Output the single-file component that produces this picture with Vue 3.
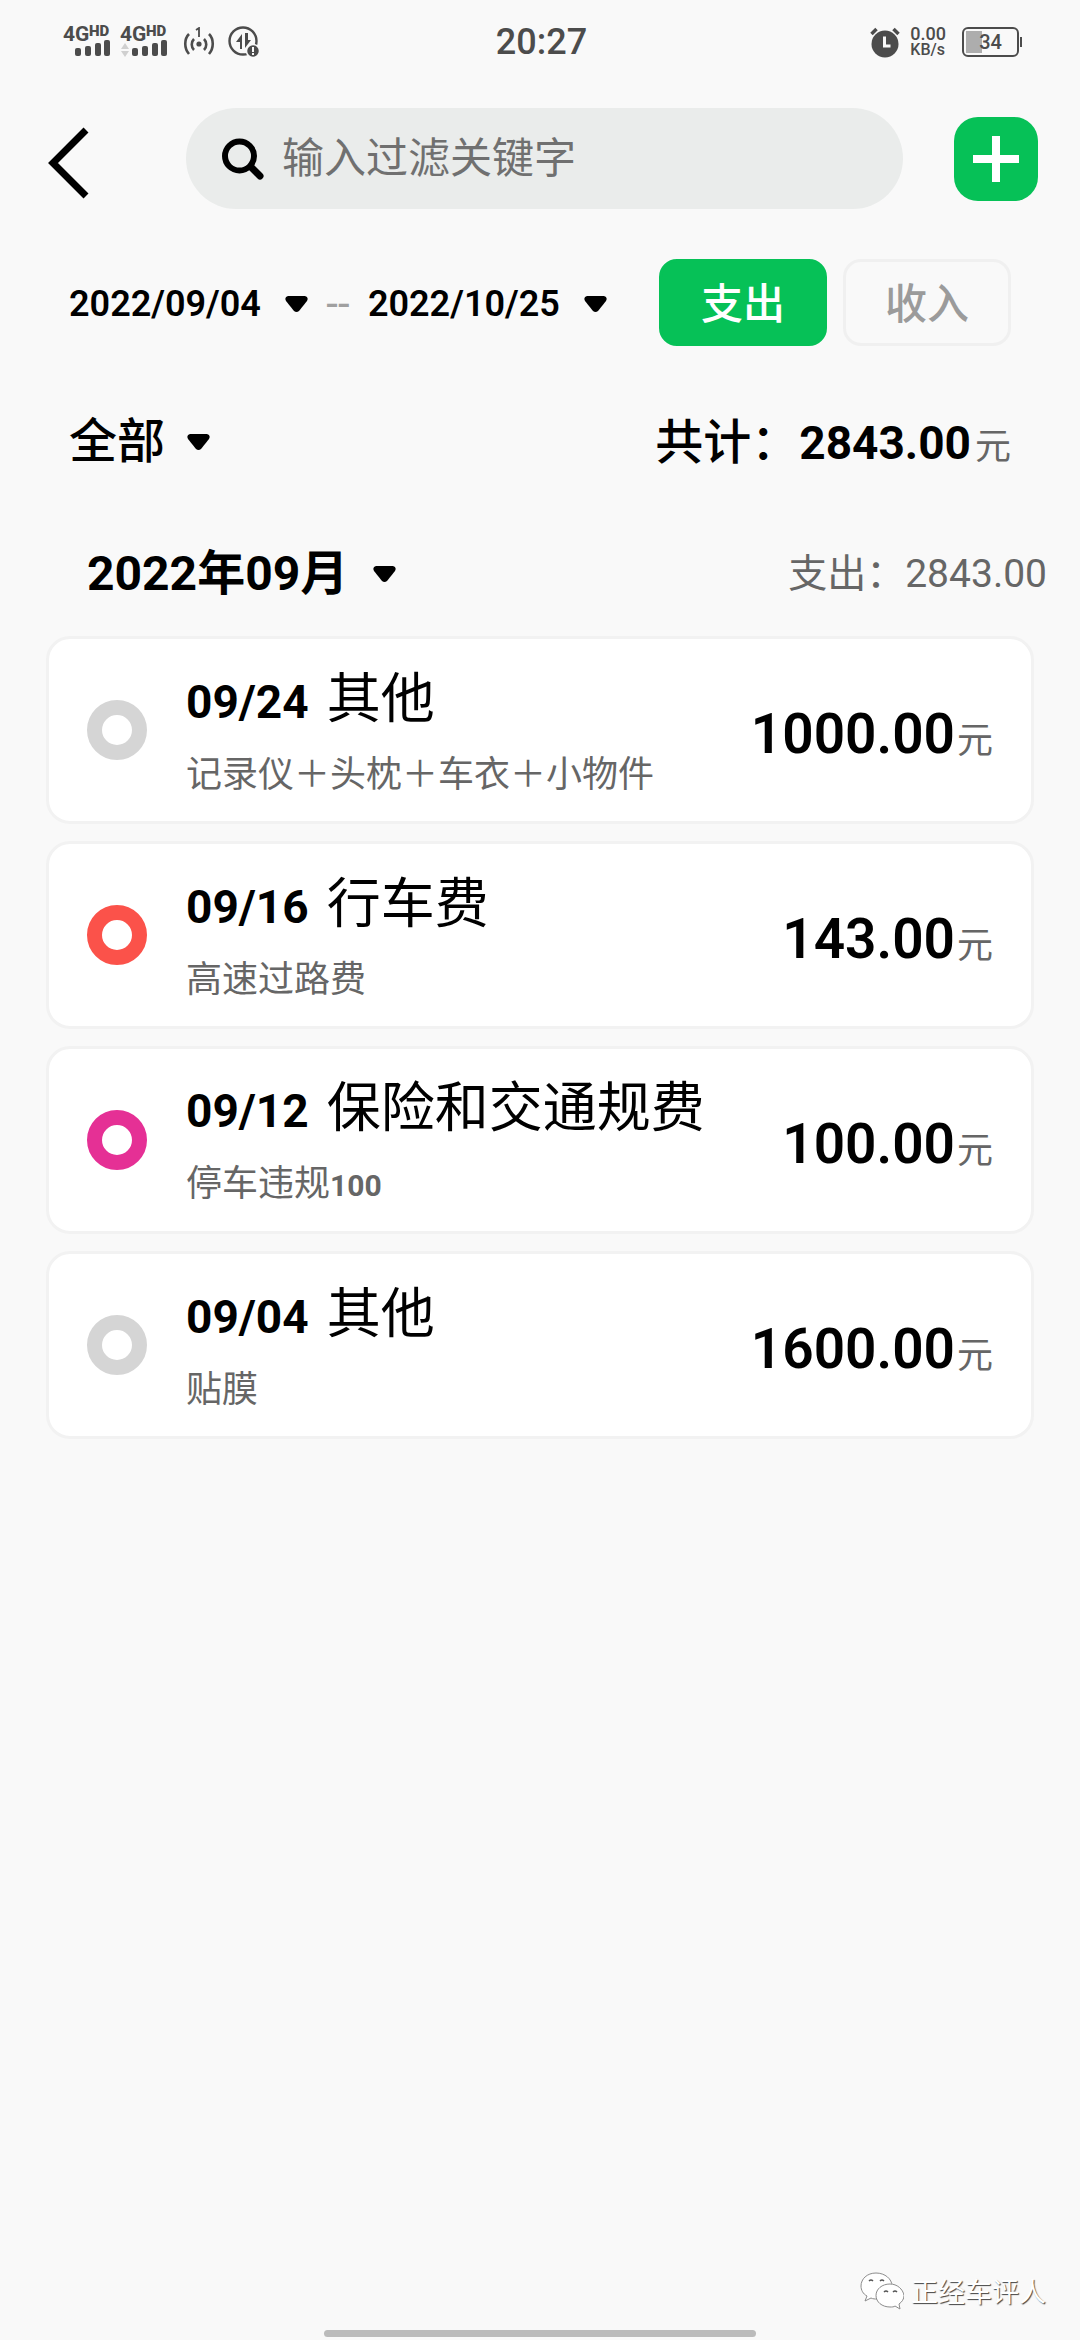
<template>
  <div class="page">
    <div class="status-bar">
      <div class="status-left">
        <svg width="54" height="48" viewBox="-2 -6 54 48" class="signal">
          <text x="0" y="17" class="net">4G</text>
          <text x="26" y="12" class="hd">HD</text>
          <rect x="12" y="24" width="6" height="8" rx="2" />
          <rect x="22" y="22" width="6" height="10" rx="2" />
          <rect x="32" y="19" width="6" height="13" rx="2" />
          <rect x="41" y="16" width="6" height="16" rx="2" />
        </svg>
        <svg width="54" height="48" viewBox="-2 -6 54 48" class="signal">
          <text x="0" y="17" class="net">4G</text>
          <text x="26" y="12" class="hd">HD</text>
          <path d="M1 25l4-6 4 6zM1 27h8l-4 6z" fill="#d0d0d0" />
          <rect x="12" y="24" width="6" height="8" rx="2" />
          <rect x="22" y="22" width="6" height="10" rx="2" />
          <rect x="32" y="19" width="6" height="13" rx="2" />
          <rect x="41" y="16" width="6" height="16" rx="2" />
        </svg>
        <svg width="32" height="30" viewBox="0 0 32 30" class="hotspot" fill="none" stroke="#4c4c4c" stroke-width="2.6">
          <path d="M6 7c-5 5-5 14 0 20M26 7c5 5 5 14 0 20M11 12c-3 3-3 8 0 11M21 12c3 3 3 8 0 11" />
          <path d="M13 3l3-2v9" stroke-width="1.8" />
          <circle cx="16" cy="17" r="2.6" fill="#4c4c4c" stroke="none" />
        </svg>
        <svg width="32" height="32" viewBox="0 0 32 32" class="data-icon">
          <circle cx="15" cy="15" r="13.5" fill="none" stroke="#4c4c4c" stroke-width="2.4" />
          <path d="M14 23V8l-6 8h4v7zM17 7v15l6-8h-3V7z" fill="#4c4c4c" />
          <circle cx="25" cy="25" r="6.5" fill="#4c4c4c" stroke="#f9f9f9" stroke-width="1.5" />
          <path d="M25 21v5M25 27v2" stroke="#f9f9f9" stroke-width="2" />
        </svg>
      </div>
      <div class="status-time">20:27</div>
      <div class="status-right">
        <svg width="30" height="32" viewBox="0 0 30 32">
          <circle cx="15" cy="18" r="13.5" fill="#4c4c4c" />
          <path d="M1.5 8l5-5M28.5 8l-5-5" stroke="#4c4c4c" stroke-width="3.5" />
          <path d="M14.5 10.5V20h6" fill="none" stroke="#f9f9f9" stroke-width="3" />
        </svg>
        <div class="speed"><span class="speed-num">0.00</span><span class="speed-unit">KB/s</span></div>
        <div class="battery"><span>34</span></div>
      </div>
    </div>

    <header class="header">
      <button class="btn-back" aria-label="返回">
        <svg width="42" height="72" viewBox="0 0 42 72"><path d="M38 3L5 36l33 33" fill="none" stroke="#000" stroke-width="7" /></svg>
      </button>
      <label class="search">
        <svg width="42" height="42" viewBox="0 0 42 42" fill="none" stroke="#000">
          <circle cx="17.5" cy="18" r="14.5" stroke-width="6" />
          <path d="M29 29l9 9" stroke-width="7" stroke-linecap="round" />
        </svg>
        <input v-model="keyword" type="text" placeholder="输入过滤关键字" aria-label="输入过滤关键字" />
      </label>
      <button class="btn-add" aria-label="添加">
        <svg width="46" height="46" viewBox="0 0 46 46"><path d="M23 0v46M0 23h46" stroke="#fff" stroke-width="8" /></svg>
      </button>
    </header>

    <section class="filters">
      <div class="dates">
        <button class="btn-date">{{ startDate }}<svg class="arrow" viewBox="0 0 23 16"><path d="M3 0h17q4 1 2 5l-8 10q-2.500 2-5 0L1 5q-2-4 2-5z" /></svg></button>
        <span class="dash">--</span>
        <button class="btn-date">{{ endDate }}<svg class="arrow" viewBox="0 0 23 16"><path d="M3 0h17q4 1 2 5l-8 10q-2.500 2-5 0L1 5q-2-4 2-5z" /></svg></button>
      </div>
      <div class="types">
        <button v-for="t in types" :key="t" class="btn-type" :class="{ active: t === type }" @click="type = t">{{ t }}</button>
      </div>
    </section>

    <section class="summary">
      <label class="picker">
        <select v-model="category" aria-label="分类"><option>全部</option></select>
        <svg class="arrow" viewBox="0 0 23 16"><path d="M3 0h17q4 1 2 5l-8 10q-2.500 2-5 0L1 5q-2-4 2-5z" /></svg>
      </label>
      <div class="total">共计：<span class="total-num">{{ total }}</span><span class="unit">元</span></div>
    </section>

    <section class="month">
      <label class="picker month-picker">
        <select v-model="month" aria-label="月份"><option>2022年09月</option></select>
        <svg class="arrow" viewBox="0 0 23 16"><path d="M3 0h17q4 1 2 5l-8 10q-2.500 2-5 0L1 5q-2-4 2-5z" /></svg>
      </label>
      <div class="month-total">{{ type }}：{{ total }}</div>
    </section>

    <ul class="list">
      <li v-for="item in items" :key="item.date" class="item-card">
        <span class="ring" :style="{ borderColor: item.color }"></span>
        <div class="info">
          <div class="title"><span class="date">{{ item.date }}</span>{{ item.name }}</div>
          <div class="note">{{ item.note }}<span v-if="item.noteNum" class="note-num">{{ item.noteNum }}</span></div>
        </div>
        <div class="amount"><span class="amount-num">{{ item.amount.toFixed(2) }}</span><span class="unit">元</span></div>
      </li>
    </ul>

    <footer class="footer">
      <div class="watermark">
        <svg width="44" height="38" viewBox="0 0 44 38" fill="#fff" stroke="#8c8c8c" stroke-width="1">
          <path d="M16 1C7 1 1 7 1 14c0 4 2 8 6 10l-2 5 6-3c2 1 4 1 6 1 8 0 15-6 15-13S25 1 16 1z" />
          <path d="M30 12c-8 0-14 5-14 11.500S22 35 30 35c2 0 4 0 5-1l5 3-1-5c3-2 5-5 5-8.500C43 17 37 12 30 12z" />
          <path d="M9 9q2-2 4 0M20 9q2-2 4 0M24 20q2-2 4 0M33 20q2-2 4 0" fill="none" stroke="#555" stroke-width="1.5" />
        </svg>
        <span>正经车评人</span>
      </div>
      <div class="home-bar"></div>
    </footer>
  </div>
</template>

<script setup>
import { ref, computed } from 'vue';

const keyword = ref('');
const startDate = ref('2022/09/04');
const endDate = ref('2022/10/25');
const types = ['支出', '收入'];
const type = ref('支出');
const category = ref('全部');
const month = ref('2022年09月');
const items = ref([
  { date: '09/24', name: '其他', note: '记录仪＋头枕＋车衣＋小物件', amount: 1000, color: '#d5d5d5' },
  { date: '09/16', name: '行车费', note: '高速过路费', amount: 143, color: '#fb524a' },
  { date: '09/12', name: '保险和交通规费', note: '停车违规', noteNum: '100', amount: 100, color: '#e53095' },
  { date: '09/04', name: '其他', note: '贴膜', amount: 1600, color: '#d5d5d5' },
]);
const total = computed(() => items.value.reduce((sum, i) => sum + i.amount, 0).toFixed(2));
</script>

<style>
body { margin: 0; background: #f9f9f9; }
</style>

<style scoped>
.page { min-height: 100vh; display: flex; flex-direction: column; background: #f9f9f9; color: #000; font-family: Roboto, "Noto Sans CJK SC", sans-serif; }
button, input, select { font: inherit; color: inherit; margin: 0; padding: 0; border: none; background: none; }
button { cursor: pointer; }
svg { display: block; flex: none; }

.status-bar { display: grid; grid-template-columns: 1fr auto 1fr; align-items: center; height: 84px; padding: 0 58px 0 61px; color: #4c4c4c; font-weight: 500; }
.status-left { display: flex; align-items: center; gap: 3px; }
.signal { fill: #4c4c4c; }
.net { font-size: 21px; font-weight: 700; }
.hd { font-size: 15px; font-weight: 900; }
.hotspot { margin-left: 8px; }
.data-icon { margin-left: 10px; }
.status-time { font-size: 36px; }
.status-right { display: flex; align-items: center; justify-content: flex-end; gap: 10px; }
.speed { display: flex; flex-direction: column; }
.speed-num { font-size: 18px; line-height: 16px; }
.speed-unit { font-size: 16px; line-height: 16px; }
.battery { position: relative; box-sizing: border-box; width: 57px; height: 30px; margin: 0 3px 0 6px; border: 2px solid #4c4c4c; border-radius: 6px; display: flex; align-items: center; justify-content: center; font-size: 20px; background: linear-gradient(#adadad, #adadad) 2px 2px / 16px 22px no-repeat; }
.battery::after { content: ""; position: absolute; right: -5px; top: 8px; width: 2px; height: 10px; background: #4c4c4c; }

.header { display: flex; align-items: center; margin-top: 24px; padding: 0 42px 0 48px; }
.btn-back { padding-top: 8px; }
.search { flex: 1; display: flex; align-items: center; gap: 18px; height: 101px; margin: 0 51px 0 96px; padding: 0 36px; border-radius: 51px; background: #eaeceb; }
.search input { flex: 1; min-width: 0; font-size: 42px; outline: none; }
.search input::placeholder { color: #707070; opacity: 1; }
.btn-add { display: flex; align-items: center; justify-content: center; width: 84px; height: 84px; border-radius: 24px; background: #06c157; }

.arrow { width: 23px; height: 16px; fill: #000; }
.filters { display: flex; align-items: center; justify-content: space-between; margin-top: 50px; padding: 0 69px; }
.dates { display: flex; align-items: center; padding-top: 2px; }
.btn-date { display: flex; align-items: center; gap: 24px; font-size: 36px; line-height: 44px; font-weight: 600; }
.dash { width: 60px; text-align: center; color: #a0a0a0; font-size: 42px; }
.types { display: flex; gap: 16px; }
.btn-type { box-sizing: border-box; width: 168px; height: 87px; padding-bottom: 4px; border: 3px solid #f0f0f0; border-radius: 18px; font-size: 42px; font-weight: 500; color: #9b9b9b; }
.btn-type.active { border-color: #06c157; background: #06c157; color: #fff; }

.picker { display: flex; align-items: center; gap: 21px; font-size: 48px; font-weight: 500; }
.picker select { appearance: none; height: 72px; line-height: 72px; outline: none; }
.summary { display: flex; align-items: center; justify-content: space-between; margin-top: 60px; padding: 0 69px; height: 72px; }
.total { display: flex; align-items: baseline; padding-top: 6px; font-size: 48px; line-height: 72px; font-weight: 500; }
.total-num { font-size: 46px; font-weight: 700; }
.unit { margin-left: 4px; color: #666; font-size: 36px; font-weight: 400; }
.month { display: flex; align-items: center; justify-content: space-between; margin-top: 60px; padding: 0 33px 0 87px; height: 72px; }
.month-picker { font-weight: 700; gap: 24px; }
.month-total { color: #666; font-size: 39px; line-height: 54px; }

.list { list-style: none; display: flex; flex-direction: column; gap: 17px; margin: 26px 46px 0; padding: 0; }
.item-card { box-sizing: border-box; display: flex; align-items: center; height: 188px; padding: 0 38px; background: #fff; border: 3px solid #f2f2f2; border-radius: 24px; }
.ring { box-sizing: border-box; flex: none; width: 60px; height: 60px; border: 15px solid; border-radius: 50%; }
.info { flex: 1; min-width: 0; margin-left: 39px; padding-top: 8px; }
.title { font-size: 54px; line-height: 80px; }
.date { margin-right: 18px; font-size: 46px; font-weight: 700; }
.note { color: #666; font-size: 36px; line-height: 66px; }
.note-num { font-size: 30px; font-weight: 700; }
.amount { display: flex; align-items: baseline; padding-top: 14px; line-height: 80px; }
.amount-num { font-size: 55px; font-weight: 600; }
.amount .unit { margin-left: 2px; }

.footer { margin-top: auto; display: flex; flex-direction: column; }
.watermark { display: flex; align-items: center; align-self: flex-end; gap: 7px; margin-right: 34px; color: #fff; font-size: 27px; text-shadow: 1px 1px 1px #444; }
.home-bar { align-self: center; width: 40%; height: 7px; margin: 20px 0 3px; border-radius: 4px; background: #bbb; }
</style>
